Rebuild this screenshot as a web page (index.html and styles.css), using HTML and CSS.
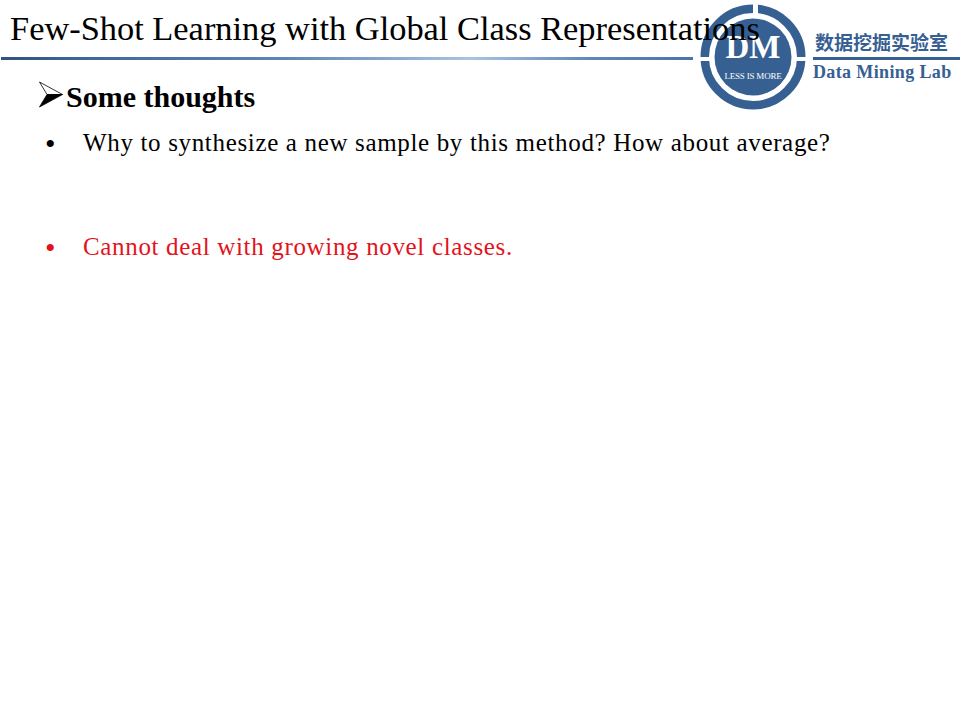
FILE: index.html
```html
<!DOCTYPE html>
<html lang="en">
<head>
<meta charset="utf-8">
<title>Few-Shot Learning with Global Class Representations</title>
<link rel="stylesheet" href="styles.css">
</head>
<body>
<div class="slide">
  <header class="header">
    <h1 class="title">Few-Shot Learning with Global Class Representations</h1>
    <div class="rule"></div>
  </header>
  <svg class="logo" width="110" height="110" viewBox="0 0 110 110" aria-hidden="true">
    <circle cx="55" cy="55" r="48.25" fill="none" stroke="#366092" stroke-width="8.5"/>
    <circle cx="55" cy="55" r="38.5" fill="#366092"/>
    <rect x="55" y="0" width="5" height="13" fill="#fff"/>
    <rect x="0" y="55" width="13" height="4" fill="#fff"/>
    <rect x="97" y="55" width="13" height="4" fill="#fff"/>
    <text class="logo-dm" x="55" y="55.5" text-anchor="middle">DM</text>
    <text class="logo-sub" x="55" y="76.5" text-anchor="middle">LESS IS MORE</text>
  </svg>
  <div class="brand">
    <div class="brand-cn">数据挖掘实验室</div>
    <div class="brand-rule"></div>
    <div class="brand-en">Data Mining Lab</div>
  </div>
  <main class="content">
    <h2 class="heading"><svg class="arrow" width="24" height="28" viewBox="0 0 24 28" aria-hidden="true"><path d="M0.5 1 L23.5 13.5 L8 13.5 Z" fill="#fff" stroke="#000" stroke-width="0.8"/><path d="M0.5 26 L23.5 13.5 L8 13.5 Z" fill="#000" stroke="#000" stroke-width="0.8"/></svg>Some thoughts</h2>
    <ul class="points">
      <li class="point">Why to synthesize a new sample by this method? How about average?</li>
      <li class="point point-red">Cannot deal with growing novel classes.</li>
    </ul>
  </main>
</div>
</body>
</html>
```
FILE: styles.css
```css
html, body {
  margin: 0;
  padding: 0;
  background: #fff;
}
.slide {
  position: relative;
  width: 960px;
  height: 720px;
  overflow: hidden;
  background: #fff;
  font-family: "Liberation Serif", "Noto Sans CJK SC", serif;
  color: #000;
}
.header {
  padding: 8px 0 0 1px;
}
.title {
  position: relative;
  z-index: 2;
  margin: 0 0 0 9px;
  font-size: 34.4px;
  line-height: 41px;
  font-weight: 400;
  white-space: nowrap;
}
.rule {
  width: 692px;
  height: 3px;
  margin-top: 8px;
  background: linear-gradient(90deg, #2f5280 0%, #3d6596 11%, #5b85b5 40%, #a9c3df 68%, #5f88ba 85%, #4a74a8 100%);
}
.logo {
  position: absolute;
  left: 697.5px;
  top: 1.5px;
}
.logo-dm {
  font-family: "Liberation Serif", serif;
  font-size: 33px;
  font-weight: 700;
  fill: #fff;
}
.logo-sub {
  font-family: "Liberation Serif", serif;
  font-size: 9px;
  letter-spacing: -0.2px;
  fill: #fff;
}
.brand {
  position: absolute;
  left: 813px;
  top: 28px;
  width: 147px;
  color: #366092;
  font-weight: 700;
}
.brand-cn {
  padding-left: 2px;
  font-family: "Noto Sans CJK SC", sans-serif;
  font-size: 19px;
  line-height: 27px;
  white-space: nowrap;
}
.brand-rule {
  height: 3px;
  margin-top: 2px;
  background: #366092;
}
.brand-en {
  font-size: 18px;
  line-height: 20px;
  margin-top: 2px;
  white-space: nowrap;
  letter-spacing: 0.37px;
}
.content {
  padding: 18px 0 0 39px;
}
.heading {
  display: flex;
  align-items: center;
  margin: 0;
  font-size: 30px;
  line-height: 38px;
  font-weight: 700;
  white-space: nowrap;
}
.arrow {
  flex: none;
  margin: -4px 3px 0 0;
}
.points {
  list-style: none;
  margin: 13px 0 0;
  padding: 0 0 0 44px;
  display: flex;
  flex-direction: column;
  gap: 76px;
}
.point {
  position: relative;
  font-size: 25px;
  line-height: 28px;
  letter-spacing: 0.66px;
  white-space: nowrap;
}
.point::before {
  content: "•";
  position: absolute;
  left: -38px;
  top: 1px;
  font-size: 30px;
  letter-spacing: 0;
}
.point-red {
  color: #e3121c;
}
```
